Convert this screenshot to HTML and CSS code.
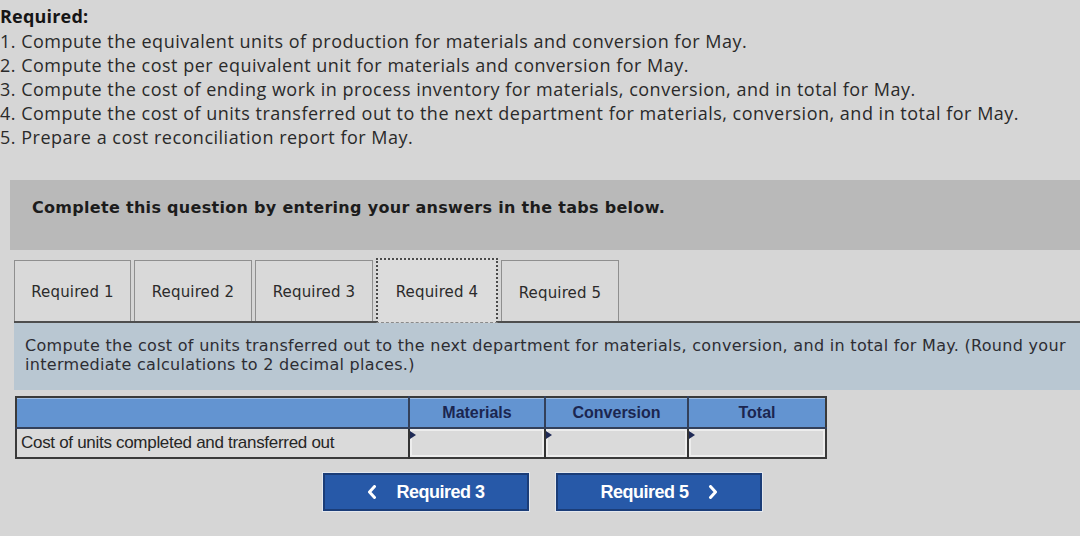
FILE: index.html
```html
<!DOCTYPE html>
<html lang="en">
<head>
<meta charset="utf-8">
<title>Required</title>
<link rel="stylesheet" href="styles.css">
</head>
<body>
<div class="page">
  <div class="req">
    <div class="req-title">Required:</div>
    <div class="req-line">1. Compute the equivalent units of production for materials and conversion for May.</div>
    <div class="req-line">2. Compute the cost per equivalent unit for materials and conversion for May.</div>
    <div class="req-line">3. Compute the cost of ending work in process inventory for materials, conversion, and in total for May.</div>
    <div class="req-line">4. Compute the cost of units transferred out to the next department for materials, conversion, and in total for May.</div>
    <div class="req-line">5. Prepare a cost reconciliation report for May.</div>
  </div>

  <div class="panel">
    <div class="instr">Complete this question by entering your answers in the tabs below.</div>
    <div class="work">
      <div class="tabs">
        <div class="tab t1">Required 1</div>
        <div class="tab t2">Required 2</div>
        <div class="tab t3">Required 3</div>
        <div class="tab active">Required 4</div>
        <div class="tab t5">Required 5</div>
      </div>
      <div class="prompt">Compute the cost of units transferred out to the next department for materials, conversion, and in total for May. (Round your intermediate calculations to 2 decimal places.)</div>

      <table class="grid">
        <tr class="head">
          <th class="label"></th>
          <th class="c-mat">Materials</th>
          <th class="c-conv">Conversion</th>
          <th class="c-tot">Total</th>
        </tr>
        <tr class="body">
          <td class="label">Cost of units completed and transferred out</td>
          <td class="inp"></td>
          <td class="inp"></td>
          <td class="inp"></td>
        </tr>
      </table>

      <div class="nav">
        <div class="btn"><svg class="chev" width="10" height="14" viewBox="0 0 10 14"><polyline points="7.5,1.5 2.5,7 7.5,12.5" fill="none" stroke="#ffffff" stroke-width="3" stroke-linecap="round" stroke-linejoin="round"/></svg><span>Required 3</span></div>
        <div class="btn"><span>Required 5</span><svg class="chev right" width="10" height="14" viewBox="0 0 10 14"><polyline points="2.5,1.5 7.5,7 2.5,12.5" fill="none" stroke="#ffffff" stroke-width="3" stroke-linecap="round" stroke-linejoin="round"/></svg></div>
      </div>
    </div>
  </div>
</div>
</body>
</html>
```

FILE: styles.css
```css
html, body {
  margin: 0;
  padding: 0;
}
body {
  background: #d6d6d6;
  width: 1080px;
  height: 536px;
  overflow: hidden;
}
.page {
  width: 1080px;
}
.req {
  padding: 4px 0 0 0;
  font-family: "Open Sans", "Noto Sans", sans-serif;
  font-size: 18px;
  letter-spacing: 0.5px;
  line-height: 24px;
  color: #2a2a2a;
}
.req-title {
  font-weight: 700;
  color: #151515;
  line-height: 25px;
  letter-spacing: 0.2px;
}
.req-line {
  white-space: nowrap;
}
.panel {
  margin: 31px 0 0 10px;
}
.instr {
  background: #b9b9b9;
  height: 70px;
  box-sizing: border-box;
  padding: 18px 0 0 22px;
  font-family: "DejaVu Sans", Verdana, sans-serif;
  font-weight: 700;
  font-size: 16px;
  letter-spacing: 0.3px;
  line-height: 20px;
  color: #1c1c1c;
}
.work {
  padding-left: 4px;
}
.tabs {
  display: flex;
  gap: 3px;
  padding-top: 8px;
  border-bottom: 2px solid #4e4e4e;
  align-items: flex-end;
}
.tab {
  height: 61px;
  box-sizing: border-box;
  border: 1px solid #8f8f8f;
  border-bottom: none;
  background: #d9d9d9;
  display: flex;
  align-items: center;
  justify-content: center;
  font-family: "DejaVu Sans", Verdana, sans-serif;
  font-size: 15px;
  letter-spacing: 0.15px;
  color: #2b2b2b;
  padding-top: 1px;
}
.t1 { width: 117px; }
.t2 { width: 118px; }
.t3 { width: 118px; }
.t5 { width: 118px; padding-top: 4px; }
.tab.active {
  width: 122px;
  height: 65px;
  margin-bottom: -2px;
  border: 2px dotted #4a4a4a;
  border-bottom: 1px dashed #8a8a8a;
  background: #dcdcdc;
  padding-top: 2px;
}
.prompt {
  background: #b9c7d2;
  height: 67px;
  box-sizing: border-box;
  padding: 13px 4px 0 11px;
  font-family: "DejaVu Sans", Verdana, sans-serif;
  font-size: 16px;
  letter-spacing: 0.3px;
  line-height: 19px;
  color: #2d2d33;
}
.grid {
  margin: 6px 0 0 1px;
  border-collapse: collapse;
  border: 2px solid #3a3a3a;
  font-family: "Liberation Sans", Arial, sans-serif;
}
.grid th, .grid td {
  padding: 0;
}
.head th {
  height: 29px;
  background: #6394d1;
  color: #1b2650;
  font-size: 16px;
  font-weight: 700;
  text-align: center;
  border-bottom: 2px solid #33405a;
  border-left: 2px solid #33405a;
  box-shadow: inset 0 1px 0 #9fbde3;
}
.head th.label {
  border-left: none;
}
.label { width: 387px; }
.c-mat { width: 134px; }
.c-conv { width: 141px; }
.c-tot { width: 136px; }
.body td {
  height: 28px;
  background: #dadada;
  font-size: 17px;
  color: #262626;
}
.body td.label {
  padding-left: 4px;
  letter-spacing: -0.3px;
}
.body td.inp {
  position: relative;
  border-left: 2px solid #333;
  box-shadow: inset 0 0 0 2px #ededed;
}
.body td.inp::before {
  content: "";
  position: absolute;
  left: 0;
  top: 2px;
  border-style: solid;
  border-width: 4px 0 4px 6px;
  border-color: transparent transparent transparent #1f2a55;
}
.nav {
  display: flex;
  justify-content: center;
  gap: 27px;
  margin-top: 14px;
  padding-right: 9px;
}
.btn {
  width: 206px;
  height: 38px;
  box-sizing: border-box;
  background: #2759a8;
  border: 2px solid #1b3d78;
  box-shadow: 0 0 0 1px #e4e8ee;
  display: flex;
  align-items: center;
  justify-content: center;
  font-family: "Liberation Sans", Arial, sans-serif;
  font-weight: 700;
  font-size: 18px;
  color: #ffffff;
  letter-spacing: -0.5px;
}
.chev {
  display: block;
  margin-right: 19px;
}
.chev.right {
  margin-right: 0;
  margin-left: 19px;
}
```
